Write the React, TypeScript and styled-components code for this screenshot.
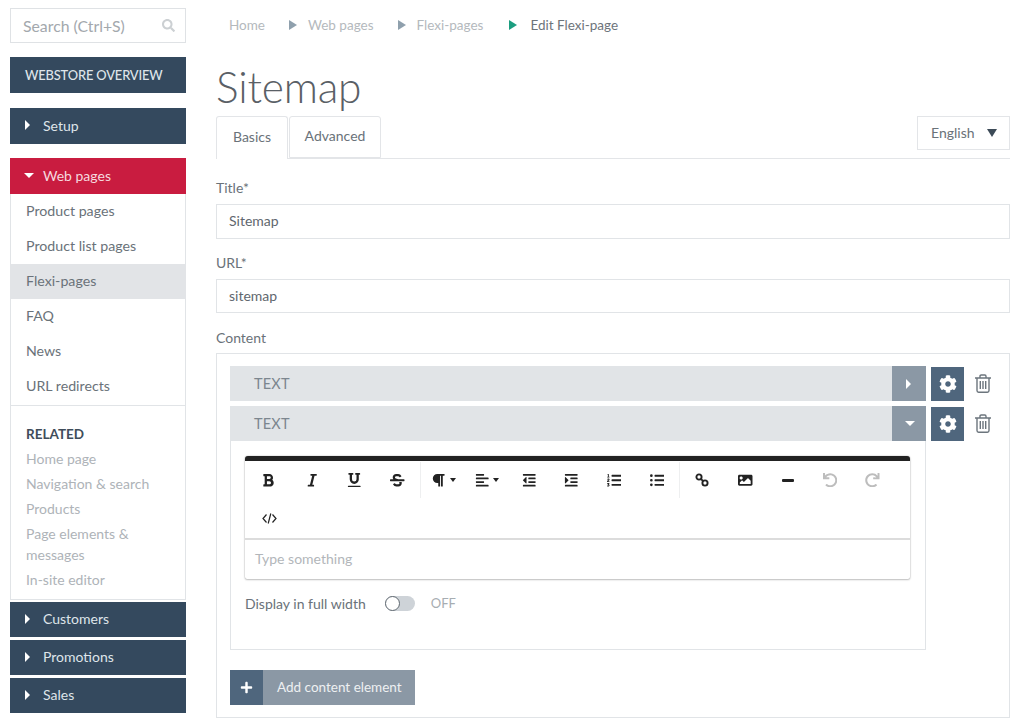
import React from "react";
import styled, { createGlobalStyle } from "styled-components";
import {
  FaBold, FaItalic, FaUnderline, FaStrikethrough, FaParagraph, FaAlignLeft, FaOutdent, FaIndent,
  FaListOl, FaListUl, FaImage, FaUndo, FaRedo, FaCog, FaSearch, FaPlus,
} from "react-icons/fa";

const Global = createGlobalStyle`
  html, body { margin: 0; padding: 0; background: #fff; }
  body { font-family: Lato, "Liberation Sans", sans-serif; color: #5c6670; }
  * { box-sizing: border-box; }
`;

const Page = styled.div`
  width: 1024px; height: 727px; overflow: hidden;
  display: grid; grid-template-columns: 176px 794px; column-gap: 30px;
  padding: 8px 14px 0 10px;
`;
const Sidebar = styled.aside`display: flex; flex-direction: column;`;
const Search = styled.div`
  height: 35px; border: 1px solid #dfe2e5; display: flex; align-items: center; justify-content: space-between;
  padding: 0 10px 1px 12px; font-size: 15.8px; color: #a3a8ad; margin-bottom: 14px;
  svg { color: #ccd0d3; font-size: 13px; }
`;
const NavBar = styled.div<{ $active?: boolean; $gap?: number; $plain?: boolean }>`
  height: ${p => (p.$plain ? 36 : 35.5)}px; flex: none; display: flex; align-items: center;
  padding: ${p => (p.$plain ? "0 0 0 15px" : "0 0 1px 15px")}; gap: 12px;
  background: ${p => (p.$active ? "#c91c40" : "#34495e")};
  color: ${p => (p.$active ? "#f6d9df" : "#dfe5ea")};
  font-size: ${p => (p.$plain ? 12.9 : 14)}px; margin-bottom: ${p => p.$gap ?? 0}px;
  font-weight: ${p => (p.$plain ? 500 : 400)};
  letter-spacing: ${p => (p.$plain ? "-0.15px" : "0")};
`;
const TriRight = styled.span`
  width: 0; height: 0; border-left: 5px solid #fff; border-top: 5px solid transparent; border-bottom: 5px solid transparent;
  margin-right: 1px;
`;
const TriDown = styled.span`
  width: 0; height: 0; border-top: 5px solid #fff; border-left: 5px solid transparent; border-right: 5px solid transparent;
  margin-left: -1px; margin-right: -3px;
`;
const SubPanel = styled.div`
  border: 1px solid #e1e4e7; border-top: 0; display: flex; flex-direction: column; height: 406px; margin-bottom: 2px;
`;
const SubList = styled.div`
  display: flex; flex-direction: column; height: 212px; border-bottom: 1px solid #e1e4e7;
`;
const SubItem = styled.div<{ $sel?: boolean }>`
  height: 35.4px; display: flex; align-items: center; font-size: 14.2px; color: #6a7279;
  margin: 0 -1px; padding: 0 0 2px 16px;
  background: ${p => (p.$sel ? "#e2e4e7" : "transparent")};
`;
const Related = styled.div`display: flex; flex-direction: column; padding: 18px 15px 0 15px;`;
const RelatedTitle = styled.div`font-size: 13.5px; font-weight: 700; color: #3f4d5a; line-height: 20px; margin-bottom: 5px;`;
const RelatedLink = styled.div`font-size: 14px; line-height: 20.5px; color: #aeb3b8; margin-bottom: 4.8px;`;

const Main = styled.main`display: flex; flex-direction: column;`;
const Crumbs = styled.nav`
  display: flex; align-items: center; height: 34px; padding: 0 0 1px 13px; font-size: 13.5px; color: #b4b9bd;
`;
const CrumbArrow = styled.span<{ $green?: boolean }>`
  width: 0; height: 0; margin: ${p => (p.$green ? "0 13px 0 26px" : "0 11px 0 24px")};
  border-left: 8px solid ${p => (p.$green ? "#1c9e80" : "#8fa0ad")};
  border-top: 5px solid transparent; border-bottom: 5px solid transparent;
`;
const CrumbCurrent = styled.span`color: #6d747b;`;
const Title = styled.h1`
  margin: 16px 0 0 0; font-size: 42.5px; font-weight: 300; line-height: 58px; color: #5a6066; height: 58px;
  letter-spacing: -0.2px;
`;
const TabRow = styled.div`
  display: flex; align-items: flex-start; height: 43px; border-bottom: 1px solid #e3e5e8; position: relative; gap: 1px;
`;
const Tab = styled.div<{ $on?: boolean; $w: number }>`
  width: ${p => p.$w}px; height: ${p => (p.$on ? 43 : 42)}px; padding: 0 0 3px; display: flex; align-items: center; justify-content: center; font-size: 14px;
  border: 1px solid #e3e5e8; border-bottom: ${p => (p.$on ? "0" : "1px solid #e3e5e8")};
  background: #fff; border-radius: 3px 3px 0 0; color: #6a7279; position: relative; z-index: 1;
`;
const Lang = styled.div`
  margin-left: auto; width: 93px; height: 34px; border: 1px solid #e3e5e8; display: flex; align-items: center;
  justify-content: space-between; padding: 0 12px 1px 13px; font-size: 14px; color: #6a7279;
`;
const LangTri = styled.span`
  width: 0; height: 0; border-top: 8px solid #3c4a57; border-left: 5.5px solid transparent; border-right: 5.5px solid transparent;
`;
const Label = styled.div<{ $mt: number; $mb: number }>`
  font-size: 14px; color: #6a7279; line-height: 20px; margin-top: ${p => p.$mt}px; margin-bottom: ${p => p.$mb}px;
`;
const Field = styled.div`
  height: 34.5px; border: 1px solid #e1e4e7; display: flex; align-items: center; padding: 0 0 1px 12px; font-size: 14px; color: #5f676e;
`;
const ContentBox = styled.div`
  height: 365px; border: 1px solid #e1e4e7; padding: 12px 0 0 13px; display: flex; flex-direction: column;
`;
const RowLine = styled.div<{ $mb?: number }>`
  display: flex; align-items: center; height: 35px; margin-bottom: ${p => p.$mb ?? 0}px;
`;
const RowBar = styled.div`
  width: 696px; height: 35px; background: #e1e4e7; display: flex; align-items: center; justify-content: space-between;
  padding-left: 24px; font-size: 14.5px; color: #7c868f; letter-spacing: 0.2px;
`;
const RowToggle = styled.div`
  width: 34px; height: 35px; background: #8b98a5; display: flex; align-items: center; justify-content: center;
`;
const GearBtn = styled.div`
  width: 33px; height: 34px; margin-left: 5px; background: #4f667d; color: #fff; display: flex; align-items: center; justify-content: center;
  font-size: 18px;
`;
const TrashBtn = styled.div`margin-left: 10px; display: flex; align-items: center; color: #6c757d;`;
const Panel = styled.div`
  width: 696px; height: 209px; border: 1px solid #e1e4e7; border-top: 0; padding: 15px 15px 0 14px; display: flex; flex-direction: column;
`;
const Editor = styled.div`
  width: 665px; height: 123px; border-top: 5px solid #222; border-radius: 3px 3px 2px 2px; background: #fff;
  box-shadow: 0 0 1.5px rgba(0,0,0,.35), 0 1px 2px rgba(0,0,0,.2); display: flex; flex-direction: column;
`;
const Toolbar = styled.div`height: 79px; border-bottom: 2px solid #dcdcdc; display: flex; flex-direction: column;`;
const ToolRow = styled.div`display: flex; align-items: center; height: 38px; padding-left: 1px;`;
const ToolGroup = styled.div<{ $sep?: boolean }>`
  display: flex; align-items: center; height: 36px;
  border-right: ${p => (p.$sep ? "1px solid #eeeff0" : "0")};
`;
const Tool = styled.div<{ $w?: number; $dim?: boolean }>`
  width: ${p => p.$w ?? 42.3}px; height: 36px; display: flex; align-items: center; justify-content: center; gap: 4px;
  color: ${p => (p.$dim ? "#bdbdbd" : "#222")}; font-size: 14.5px;
`;
const Caret = styled.span`
  width: 0; height: 0; border-top: 4px solid #222; border-left: 3.5px solid transparent; border-right: 3.5px solid transparent;
`;
const Placeholder = styled.div`
  flex: 1; display: flex; align-items: center; padding: 0 0 3px 10px; font-size: 14px; color: #b2b6ba;
`;
const ToggleRow = styled.div`
  display: flex; align-items: center; margin-top: 14px; height: 20px; font-size: 14px; color: #6a7279;
`;
const Switch = styled.div`
  width: 30px; height: 15px; margin-left: 19px; border-radius: 8px; background: #ced3d8; position: relative;
`;
const Knob = styled.span`
  position: absolute; left: 0; top: 0; width: 15px; height: 15px; border-radius: 50%; background: #fff; border: 1px solid #5f6870;
`;
const OffText = styled.span`margin-left: 16px; color: #a7adb2; font-size: 13px;`;
const AddBtn = styled.div`
  margin-top: 20px; width: 185px; height: 35px; background: #8b98a5; display: flex; align-items: center; color: #eef0f2; font-size: 13.5px;
  padding-bottom: 0;
`;
const AddIcon = styled.span`
  width: 33px; height: 35px; background: #4f667d; color: #fff; display: flex; align-items: center; justify-content: center; font-size: 13px;
  margin-right: 14px;
`;
const AddLabel = styled.span`margin-top: -2px;`;
const Dash = styled.span`width: 12px; height: 3px; background: #222; border-radius: 1px;`;

const Trash = () => (
  <svg width="18" height="19" viewBox="0 0 18 19" fill="none" stroke="currentColor" strokeWidth="1.4">
    <path d="M1 4h16M6 4V2.2C6 1.5 6.5 1 7.2 1h3.6c.7 0 1.2.5 1.2 1.2V4" />
    <path d="M3 4v12.5c0 1 .7 1.7 1.6 1.7h8.8c.9 0 1.6-.7 1.6-1.7V4" />
    <path d="M6.3 7v8M9 7v8M11.7 7v8" />
  </svg>
);
const ChainIcon = () => (
  <svg width="14" height="14" viewBox="0 0 14 14" fill="none" stroke="#222" strokeWidth="1.9">
    <circle cx="4" cy="4" r="2.6" />
    <circle cx="10" cy="10" r="2.6" />
    <path d="M5.8 5.8l2.4 2.4" />
  </svg>
);
const CodeIcon = () => (
  <svg width="15" height="11" viewBox="0 0 15 11" fill="none" stroke="#222" strokeWidth="1.2">
    <path d="M4.5 1.5L1 5.5l3.5 4M10.5 1.5l3.5 4-3.5 4M8.8.5L6.2 10.5" />
  </svg>
);

const App = () => (
  <>
    <Global />
    <Page>
      <Sidebar>
        <Search>Search (Ctrl+S)<FaSearch /></Search>
        <NavBar $plain $gap={15}>WEBSTORE OVERVIEW</NavBar>
        <NavBar $gap={14.5}><TriRight />Setup</NavBar>
        <NavBar $active><TriDown />Web pages</NavBar>
        <SubPanel>
          <SubList>
            <SubItem>Product pages</SubItem>
            <SubItem>Product list pages</SubItem>
            <SubItem $sel>Flexi-pages</SubItem>
            <SubItem>FAQ</SubItem>
            <SubItem>News</SubItem>
            <SubItem>URL redirects</SubItem>
          </SubList>
          <Related>
            <RelatedTitle>RELATED</RelatedTitle>
            <RelatedLink>Home page</RelatedLink>
            <RelatedLink>Navigation &amp; search</RelatedLink>
            <RelatedLink>Products</RelatedLink>
            <RelatedLink>Page elements &amp; messages</RelatedLink>
            <RelatedLink>In-site editor</RelatedLink>
          </Related>
        </SubPanel>
        <NavBar $gap={2.5}><TriRight />Customers</NavBar>
        <NavBar $gap={2.5}><TriRight />Promotions</NavBar>
        <NavBar><TriRight />Sales</NavBar>
      </Sidebar>
      <Main>
        <Crumbs>
          Home<CrumbArrow />Web pages<CrumbArrow />Flexi-pages<CrumbArrow $green /><CrumbCurrent>Edit Flexi-page</CrumbCurrent>
        </Crumbs>
        <Title>Sitemap</Title>
        <TabRow>
          <Tab $on $w={72}>Basics</Tab>
          <Tab $w={92}>Advanced</Tab>
          <Lang>English<LangTri /></Lang>
        </TabRow>
        <Label $mt={19} $mb={6}>Title*</Label>
        <Field>Sitemap</Field>
        <Label $mt={14} $mb={6}>URL*</Label>
        <Field>sitemap</Field>
        <Label $mt={15} $mb={5}>Content</Label>
        <ContentBox>
          <RowLine $mb={5}>
            <RowBar>TEXT<RowToggle><TriRight /></RowToggle></RowBar>
            <GearBtn><FaCog /></GearBtn>
            <TrashBtn><Trash /></TrashBtn>
          </RowLine>
          <RowLine>
            <RowBar>TEXT<RowToggle><TriDown /></RowToggle></RowBar>
            <GearBtn><FaCog /></GearBtn>
            <TrashBtn><Trash /></TrashBtn>
          </RowLine>
          <Panel>
            <Editor>
              <Toolbar>
                <ToolRow>
                  <ToolGroup $sep>
                    <Tool $w={45}><FaBold /></Tool>
                    <Tool><FaItalic /></Tool>
                    <Tool><FaUnderline /></Tool>
                    <Tool $w={44.3}><FaStrikethrough /></Tool>
                  </ToolGroup>
                  <ToolGroup $sep>
                    <Tool $w={45}><FaParagraph /><Caret /></Tool>
                    <Tool><FaAlignLeft /><Caret /></Tool>
                    <Tool><FaOutdent /></Tool>
                    <Tool><FaIndent /></Tool>
                    <Tool><FaListOl /></Tool>
                    <Tool $w={44.3}><FaListUl /></Tool>
                  </ToolGroup>
                  <ToolGroup>
                    <Tool $w={44}><ChainIcon /></Tool>
                    <Tool><FaImage /></Tool>
                    <Tool><Dash /></Tool>
                    <Tool $dim><FaUndo /></Tool>
                    <Tool $dim><FaRedo /></Tool>
                  </ToolGroup>
                </ToolRow>
                <ToolRow><Tool $w={46}><CodeIcon /></Tool></ToolRow>
              </Toolbar>
              <Placeholder>Type something</Placeholder>
            </Editor>
            <ToggleRow>
              Display in full width
              <Switch><Knob /></Switch>
              <OffText>OFF</OffText>
            </ToggleRow>
          </Panel>
          <AddBtn><AddIcon><FaPlus /></AddIcon><AddLabel>Add content element</AddLabel></AddBtn>
        </ContentBox>
      </Main>
    </Page>
  </>
);

export default App;
